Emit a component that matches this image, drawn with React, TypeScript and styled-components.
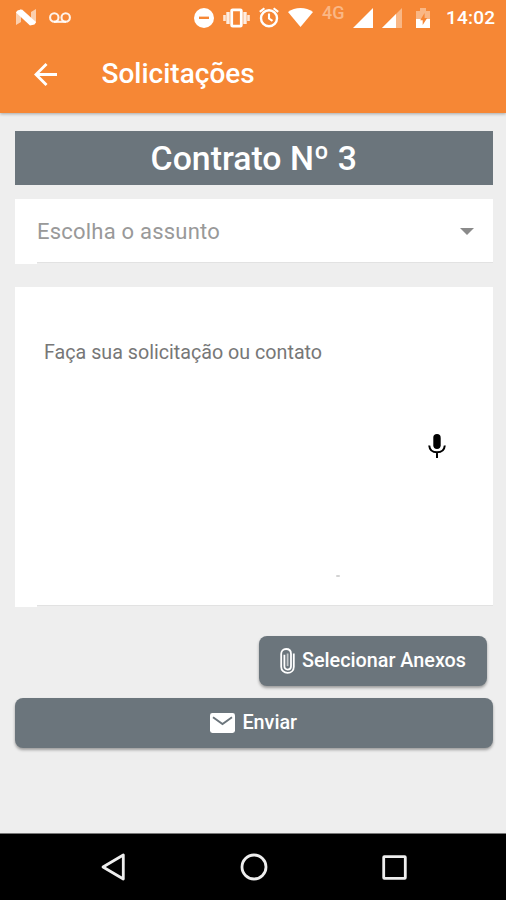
import React from "react";
import styled, { createGlobalStyle } from "styled-components";

const GlobalStyle = createGlobalStyle`
  *, *::before, *::after { box-sizing: border-box; }
  body { margin: 0; background: #eeeeee; font-family: Roboto, sans-serif; }
  svg { display: block; flex: none; }
`;

const Screen = styled.div`
  width: 506px;
  height: 900px;
  display: flex;
  flex-direction: column;
  background: #eeeeee;
  overflow: hidden;
`;

const Header = styled.header`
  height: 113px;
  flex: none;
  background: #f68735;
  color: #fff;
  box-shadow: 0 1px 3px rgba(0, 0, 0, 0.3);
`;

const StatusBar = styled.div`
  height: 35px;
  display: flex;
  align-items: center;
  justify-content: space-between;
  padding: 0 10px 0 16px;
`;

const StatusGroup = styled.div<{ $gap: number }>`
  display: flex;
  align-items: center;
  gap: ${(p) => p.$gap}px;
`;

const Network = styled.span`
  width: 22px;
  margin: -9px 0 0 0;
  font-size: 18px;
  line-height: 18px;
  font-weight: 500;
  color: #fab785;
`;

const Clock = styled.span`
  width: 50px;
  margin-left: 2px;
  font-size: 19px;
  line-height: 22px;
  font-weight: 500;
  letter-spacing: 0.2px;
  padding-top: 1px;
`;

const AppBar = styled.div`
  height: 78px;
  display: flex;
  align-items: center;
  padding-left: 34px;
  gap: 44.5px;
`;

const Title = styled.h1`
  margin: 0;
  font-size: 28px;
  line-height: 32px;
  font-weight: 500;
`;

const Content = styled.main`
  flex: 1;
  display: flex;
  flex-direction: column;
  padding: 18px 13px 0 14.5px;
`;

const Banner = styled.h2`
  margin: 0 0 14px;
  padding: 1px 0 0;
  height: 54px;
  flex: none;
  display: flex;
  align-items: center;
  justify-content: center;
  background: #6b757c;
  color: #fff;
  font-size: 33.8px;
  line-height: 40px;
  font-weight: 500;
`;

const Panel = styled.div<{ $height: number }>`
  height: ${(p) => p.$height}px;
  flex: none;
  display: flex;
  flex-direction: column;
  background: #fff;
  margin-bottom: 23px;
`;

const Underline = styled.div<{ $size: number }>`
  height: ${(p) => p.$size}px;
  margin-left: 22.5px;
  border-top: 1px solid #e2e2e2;
  background: #eeeeee;
`;

const SelectRow = styled.div`
  flex: 1;
  display: flex;
  align-items: center;
  justify-content: space-between;
  padding: 2px 19px 0 22.5px;
`;

const SelectLabel = styled.span`
  color: #999;
  font-size: 22px;
  letter-spacing: 0.22px;
`;

const MessageArea = styled.div`
  flex: 1;
  display: flex;
  flex-direction: column;
  align-items: flex-start;
  padding: 54px 47px 0 29.5px;
`;

const MessageHint = styled.span`
  color: #777;
  font-size: 19.7px;
  line-height: 24px;
`;

const Mic = styled.svg`
  align-self: flex-end;
  margin-top: 69px;
`;

const Tick = styled.span`
  width: 4px;
  height: 2px;
  margin: 117px 0 0 291.5px;
  border-radius: 1px;
  background: #d3d3d3;
`;

const Actions = styled.div`
  display: flex;
  flex-direction: column;
  align-items: flex-end;
  gap: 12px;
  padding-top: 5.5px;
`;

const Button = styled.button<{ $wide?: boolean }>`
  width: ${(p) => (p.$wide ? "100%" : "228px")};
  height: 50px;
  margin: 0 ${(p) => (p.$wide ? "0" : "6px")} 0 0;
  padding: 0;
  display: flex;
  align-items: center;
  justify-content: center;
  gap: 7px;
  border: 0;
  border-radius: 8px;
  background: #6b757c;
  color: #fff;
  box-shadow: 0 2px 3px rgba(0, 0, 0, 0.35);
  font: 500 19.8px/24px Roboto, sans-serif;
`;

const NavBar = styled.nav`
  height: 67px;
  flex: none;
  display: flex;
  justify-content: space-between;
  align-items: center;
  padding: 0 99px 0 101px;
  background: #000;
  border-top: 1px solid #777;
`;

export default function App() {
  return (
    <>
      <GlobalStyle />
      <Screen>
        <Header>
          <StatusBar>
            <StatusGroup $gap={13}>
              <svg width="20" height="17" viewBox="0 0 20 17">
                <path d="M0 3 5 0v13l-5 3zM15 3l5-3v14l-5 2z" fill="#fff" opacity=".6" />
                <path d="M0 3.5 1.5 1.5 6 .5 20 13 18.5 15.5 14 16.5 0 3.5z" fill="#fff" />
              </svg>
              <svg width="22" height="12" viewBox="0 0 22 12" fill="none" stroke="#fff" strokeWidth="2.1">
                <circle cx="5.3" cy="5.5" r="4.2" opacity=".9" />
                <circle cx="16.7" cy="5.5" r="4.2" opacity=".9" />
                <path d="M5 9.8h12" opacity=".9" />
              </svg>
            </StatusGroup>
            <StatusGroup $gap={9}>
              <svg width="20" height="20" viewBox="0 0 20 20">
                <circle cx="10" cy="10" r="10" fill="#fff" />
                <path d="M5 9.8h10" stroke="#f68735" strokeWidth="2.4" />
              </svg>
              <svg width="27" height="20" viewBox="0 0 27 20" fill="none" stroke="#fff">
                <rect x="8.7" y="1.8" width="9.6" height="16.4" rx="1" strokeWidth="2.8" />
                <path d="M5 4v12M22 4v12" strokeWidth="3.4" opacity=".85" />
                <path d="M1.5 7v6M25.5 7v6" strokeWidth="2.6" opacity=".8" />
              </svg>
              <svg width="20" height="21" viewBox="0 0 20 21" fill="none" stroke="#fff" strokeWidth="2.4">
                <circle cx="10" cy="11.3" r="8" />
                <path d="M10 6.5v5l3.5 2.4M.8 4.9 5.4 1.2M19.2 4.9 14.6 1.2" strokeWidth="2.1" />
              </svg>
              <svg width="25" height="19" viewBox="0 0 25 19">
                <path d="M0 4.1C7-1.3 18-1.3 25 4.1L12.5 19z" fill="#fff" />
              </svg>
              <Network>4G</Network>
              <svg width="20" height="20" viewBox="0 0 20 20">
                <path d="M0 20 20 0v20z" fill="#fff" />
              </svg>
              <svg width="20" height="20" viewBox="0 0 20 20">
                <path d="M0 20 20 0v20z" fill="#fff" opacity=".4" />
                <path d="M0 20 14 6v14z" fill="#fff" />
              </svg>
              <svg width="24" height="20" viewBox="0 0 24 20">
                <path d="M5 3h4V0h6v3h4v8H5z" fill="#fff" opacity=".4" />
                <path d="M5 11h14v9H5z" fill="#fff" />
                <path d="m13.6 5-4.4 7.2h2.5V17l4.5-7h-2.6z" fill="#f68735" />
              </svg>
              <Clock>14:02</Clock>
            </StatusGroup>
          </StatusBar>
          <AppBar>
            <svg width="23" height="23" viewBox="4 4 16 16">
              <path d="M20 11H7.83l5.59-5.59L12 4l-8 8 8 8 1.41-1.41L7.83 13H20z" fill="#fff" />
            </svg>
            <Title>Solicitações</Title>
          </AppBar>
        </Header>

        <Content>
          <Banner>Contrato Nº 3</Banner>

          <Panel $height={65}>
            <SelectRow>
              <SelectLabel>Escolha o assunto</SelectLabel>
              <svg width="14" height="7" viewBox="0 0 14 7">
                <path d="M0 0h14L7 7z" fill="#8a8a8a" />
              </svg>
            </SelectRow>
            <Underline $size={2} />
          </Panel>

          <Panel $height={320}>
            <MessageArea>
              <MessageHint>Faça sua solicitação ou contato</MessageHint>
              <Mic width="18" height="24" viewBox="0 0 18 24">
                <rect x="5.3" y="0" width="7.4" height="15" rx="3.7" fill="#000" />
                <path
                  d="M1.2 11.5c.4 4.4 3.5 6.8 7.8 6.8s7.4-2.4 7.8-6.8M9 18.3V24"
                  fill="none"
                  stroke="#000"
                  strokeWidth="2"
                />
              </Mic>
              <Tick />
            </MessageArea>
            <Underline $size={2} />
          </Panel>

          <Actions>
            <Button>
              <svg width="15" height="26" viewBox="0 0 15 26" fill="none" stroke="#fff" strokeWidth="1.8">
                <path d="M13.8 5.5v13.2c0 3.7-2.6 6.2-6.2 6.2s-6.4-2.5-6.4-6.2V6c0-3 2-5 4.9-5S11 3 11 6v12.3c0 2-1.3 3.3-3.3 3.3s-3.3-1.3-3.3-3.3V6.8" />
                <path d="M7.6 5.5v12.6" opacity=".6" />
              </svg>
              Selecionar Anexos
            </Button>
            <Button $wide>
              <svg width="25" height="20" viewBox="0 0 25 20">
                <rect width="25" height="20" rx="2.4" fill="#fff" />
                <path d="M3 4.3 12.5 11 22 4.3" fill="none" stroke="#6b757c" strokeWidth="1.9" />
              </svg>
              Enviar
            </Button>
          </Actions>
        </Content>

        <NavBar>
          <svg width="24" height="28" viewBox="0 0 24 28">
            <path d="M22.3 2v24L2 14z" fill="none" stroke="#eee" strokeWidth="2.8" strokeLinejoin="round" />
          </svg>
          <svg width="28" height="28" viewBox="0 0 28 28">
            <circle cx="14" cy="14" r="12" fill="none" stroke="#eee" strokeWidth="2.8" />
          </svg>
          <svg width="25" height="25" viewBox="0 0 25 25">
            <rect x="1.7" y="1.7" width="21.6" height="21.6" rx=".6" fill="none" stroke="#eee" strokeWidth="2.8" />
          </svg>
        </NavBar>
      </Screen>
    </>
  );
}
